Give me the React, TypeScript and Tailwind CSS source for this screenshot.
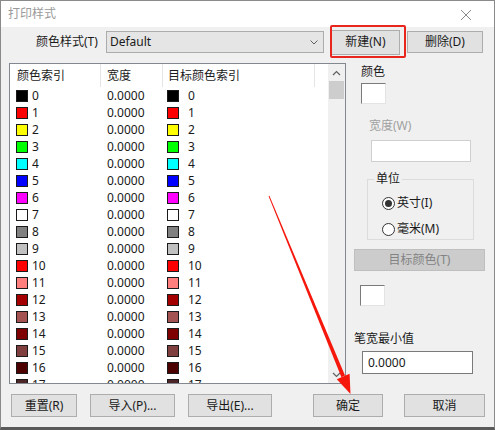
import React from 'react'

const colors = [
  '#000000', '#ff0000', '#ffff00', '#00ff00', '#00ffff', '#0000ff',
  '#ff00ff', '#ffffff', '#808080', '#c0c0c0', '#ff0000', '#ff7f7f',
  '#a50000', '#a55252', '#7f0000', '#7f3f3f', '#4c0000', '#4c2626',
]

const font = 'font-["Noto_Sans","Noto_Sans_CJK_SC",sans-serif]'

function Swatch({ color }: { color: string }) {
  return <span className="block w-[12px] h-[12px] border border-[#1a1a1a]" style={{ backgroundColor: color }} />
}

function Btn({ children, className = '' }: { children: React.ReactNode; className?: string }) {
  return (
    <div className={`flex items-center justify-center bg-[#e1e1e1] border border-[#adadad] text-[12px] text-[#1a1a1a] ${className}`}>
      {children}
    </div>
  )
}

function Radio({ checked, label }: { checked?: boolean; label: string }) {
  return (
    <div className="flex items-center gap-[2px]">
      <span className="w-[13px] h-[13px] rounded-full border border-[#333] bg-white flex items-center justify-center">
        {checked && <span className="w-[7px] h-[7px] rounded-full bg-[#333]" />}
      </span>
      <span className="text-[12px] text-[#1a1a1a]">{label}</span>
    </div>
  )
}

function SunkenBox({ className = '' }: { className?: string }) {
  return (
    <div className={`w-[25px] h-[21px] bg-white border border-t-[#7a7a7a] border-l-[#7a7a7a] border-r-[#e3e3e3] border-b-[#e3e3e3] ${className}`} />
  )
}

export default function App() {
  return (
    <div className={`relative w-[495px] h-[430px] bg-[#f0f0f0] border border-[#8a8a8a] border-b-[3px] border-b-[#5a5a5a] flex flex-col overflow-hidden ${font}`}>
      {/* title bar */}
      <div className="h-[26px] bg-white flex items-center justify-between pl-[7px] pr-[22px] shrink-0">
        <span className="text-[12px] text-[#9a9a9a]">打印样式</span>
        <svg width="12" height="12" viewBox="0 0 12 12" className="mt-[2px]">
          <path d="M1 1 L11 11 M11 1 L1 11" stroke="#8a8a8a" strokeWidth="1" />
        </svg>
      </div>

      {/* style row */}
      <div className="flex items-center h-[28px] mt-[1px] shrink-0">
        <span className="ml-[35px] text-[12px] text-[#1a1a1a]">颜色样式(T)</span>
        <div className="ml-[8px] w-[218px] h-[22px] bg-[#e5e5e5] border border-[#acacac] flex items-center justify-between pl-[3px] pr-[5px]">
          <span className="text-[12px] text-[#1a1a1a]">Default</span>
          <svg width="8" height="5" viewBox="0 0 8 5">
            <path d="M0.5 0.5 L4 4 L7.5 0.5" stroke="#606060" fill="none" strokeWidth="1" />
          </svg>
        </div>
        <Btn className="ml-[7px] w-[69px] h-[25px]">新建(N)</Btn>
        <Btn className="ml-[7px] w-[76px] h-[22px]">删除(D)</Btn>
      </div>

      {/* middle */}
      <div className="flex mt-[7px] shrink-0">
        <div className="ml-[8px] w-[337px] h-[321px] bg-white border border-[#828790] flex overflow-hidden">
          <div className="flex-1 flex flex-col overflow-hidden">
            <div className="flex h-[23px] items-center text-[12px] text-[#1a1a1a] shrink-0">
              <div className="w-[91px] pl-[7px] h-full flex items-center border-r border-[#e5e5e5]">颜色索引</div>
              <div className="w-[62px] pl-[6px] h-full flex items-center border-r border-[#e5e5e5]">宽度</div>
              <div className="w-[152px] pl-[5px] h-full flex items-center border-r border-[#e5e5e5]">目标颜色索引</div>
            </div>
            {colors.map((c, i) => (
              <div key={i} className="flex h-[17px] items-center text-[12px] text-[#1a1a1a] shrink-0">
                <div className="w-[91px] pl-[6px] flex items-center gap-[4px]">
                  <Swatch color={c} />
                  <span>{i}</span>
                </div>
                <div className="w-[62px] pl-[6px]">0.0000</div>
                <div className="w-[152px] pl-[4px] flex items-center gap-[9px]">
                  <Swatch color={c} />
                  <span>{i}</span>
                </div>
              </div>
            ))}
          </div>
          {/* scrollbar */}
          <div className="w-[17px] bg-[#f0f0f0] flex flex-col items-center shrink-0">
            <svg width="9" height="6" viewBox="0 0 9 6" className="mt-[6px]">
              <path d="M1 5 L4.5 1.5 L8 5" stroke="#606060" fill="none" strokeWidth="1.2" />
            </svg>
            <div className="mt-[5px] w-[15px] h-[18px] bg-[#cdcdcd]" />
            <div className="flex-1" />
            <svg width="9" height="6" viewBox="0 0 9 6" className="mb-[5px]">
              <path d="M1 1 L4.5 4.5 L8 1" stroke="#606060" fill="none" strokeWidth="1.2" />
            </svg>
          </div>
        </div>

        {/* right panel */}
        <div className="flex-1 flex flex-col pl-[8px]">
          <span className="ml-[7px] mt-[1px] text-[12px] text-[#1a1a1a] leading-[16px]">颜色</span>
          <SunkenBox className="ml-[7px] mt-[3px]" />
          <span className="ml-[15px] mt-[14px] text-[12px] text-[#a0a0a0] leading-[16px]">宽度(W)</span>
          <div className="ml-[17px] mt-[6px] w-[100px] h-[22px] bg-white border border-[#cfcfcf]" />
          <fieldset className="ml-[13px] mt-[10px] w-[107px] h-[68px] border border-[#dcdcdc] pl-[14px]">
            <legend className="ml-[-8px] px-[2px] text-[12px] text-[#1a1a1a] leading-[14px]">单位</legend>
            <div className="mt-[8px]">
              <Radio checked label="英寸(I)" />
            </div>
            <div className="mt-[8px]">
              <Radio label="毫米(M)" />
            </div>
          </fieldset>
          <div className="mt-[9px] w-[131px] h-[22px] bg-[#cccccc] border border-[#bfbfbf] flex items-center justify-center text-[12px] text-[#838383]">
            目标颜色(T)
          </div>
          <SunkenBox className="ml-[6px] mt-[14px]" />
          <span className="mt-[25px] text-[12px] text-[#1a1a1a] leading-[16px]">笔宽最小值</span>
          <div className="ml-[8px] mt-[4px] w-[111px] h-[23px] bg-white border border-[#7a7a7a] flex items-center pl-[5px] text-[12px] text-[#1a1a1a]">
            0.0000
          </div>
        </div>
      </div>

      {/* bottom buttons */}
      <div className="flex mt-[10px] shrink-0">
        <Btn className="ml-[10px] w-[66px] h-[23px]">重置(R)</Btn>
        <Btn className="ml-[13px] w-[85px] h-[23px]">导入(P)...</Btn>
        <Btn className="ml-[13px] w-[84px] h-[23px]">导出(E)...</Btn>
        <Btn className="ml-[41px] w-[70px] h-[23px]">确定</Btn>
        <Btn className="ml-[21px] w-[81px] h-[23px]">取消</Btn>
      </div>

      {/* red annotations */}
      <div className="absolute left-[329px] top-[24px] w-[76px] h-[33px] border-2 border-[#e8261e] rounded-[2px] pointer-events-none" />
      <svg className="absolute left-0 top-0 pointer-events-none" width="495" height="430" viewBox="0 0 495 430">
        <polygon points="267.6,195.2 268.4,194.8 344,374.6 340.4,376.2" fill="#f5170c" />
        <polygon points="335.8,378.2 348.6,372.8 349.5,393" fill="#f5170c" />
      </svg>
    </div>
  )
}
